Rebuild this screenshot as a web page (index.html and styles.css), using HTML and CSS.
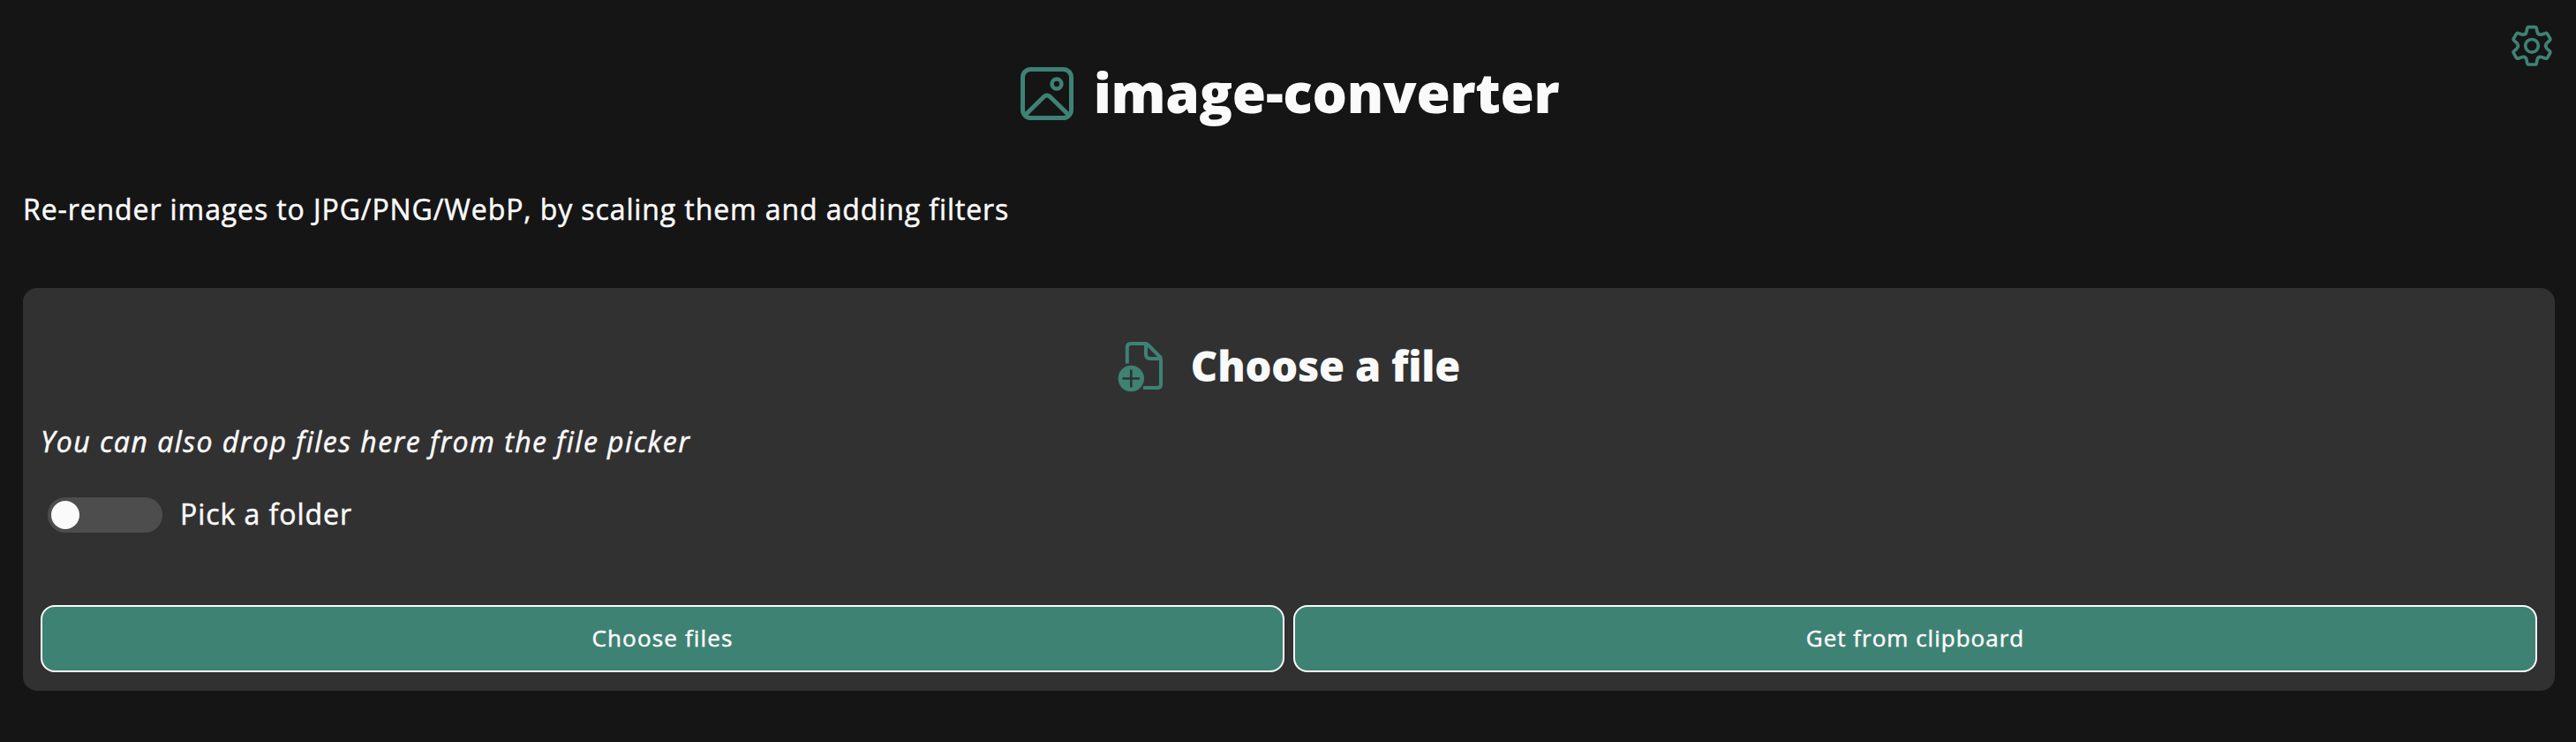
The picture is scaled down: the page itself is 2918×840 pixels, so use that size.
FILE: index.html
```html
<!DOCTYPE html>
<html lang="en">
<head>
<meta charset="utf-8">
<title>image-converter</title>
<link rel="stylesheet" href="styles.css">
</head>
<body>
<button class="settings" aria-label="Settings">
  <svg viewBox="78 80 144 144" width="48" height="48" fill="none" stroke="currentColor" stroke-width="11" stroke-linejoin="round">
    <path d="M139 91H161Q165 91 166 96L168 107Q171 119 184 116L195 112Q200 110 203 115L212 130Q214 134 210 137L202 144Q192 154 202 165L210 172Q214 175 212 179L203 195Q200 199 195 197L184 193Q171 190 168 202L166 213Q165 218 161 218H139Q135 218 134 213L132 202Q129 190 116 193L105 197Q100 199 97 195L88 179Q86 175 90 172L98 165Q108 154 98 144L90 137Q86 134 88 130L97 115Q100 110 105 112L116 116Q129 119 132 107L134 96Q135 91 139 91Z"/>
    <circle cx="150" cy="154.500" r="22"/>
  </svg>
</button>
<header class="masthead">
  <svg viewBox="0 0 60 60" width="60" height="60" fill="none" stroke="currentColor" stroke-width="5">
    <rect x="2.500" y="2.500" width="55" height="55" rx="9"/>
    <circle cx="41" cy="19" r="5.400" stroke-width="4.500"/>
    <path d="M5 54.500L26.500 33.500Q30 30.500 33.500 33.500L55 54.500"/>
  </svg>
  <h1 class="title">image-converter</h1>
</header>
<p class="intro">Re-render images to JPG/PNG/WebP, by scaling them and adding filters</p>
<main class="card">
  <div class="card-head">
    <svg viewBox="1267 387 52 58" width="52" height="58" fill="none" stroke="currentColor" stroke-width="4">
      <path d="M1277.800 412.500V394Q1277.800 390 1282 390H1298.500Q1300 390 1301.500 391.500L1315 405Q1316 406 1316 408V436Q1316 440 1312 440H1296"/>
      <path d="M1299 390V402Q1299 407 1304 407H1316"/>
      <circle cx="1282.300" cy="429.500" r="14.700" fill="currentColor" stroke="none"/>
      <path class="plus" d="M1273.500 429.500H1291M1282.300 420.500V438.500" stroke-width="2.600" stroke-linecap="round"/>
    </svg>
    <h2 class="heading">Choose a file</h2>
  </div>
  <p class="hint">You can also drop files here from the file picker</p>
  <div class="option">
    <span class="switch"><span class="knob"></span></span>
    <span class="option-label">Pick a folder</span>
  </div>
  <div class="actions">
    <button class="action">Choose files</button>
    <button class="action clip">Get from clipboard</button>
  </div>
</main>
</body>
</html>
```
FILE: styles.css
```css
* { box-sizing: border-box; }
body {
  margin: 0;
  padding: 70px 24px 0 26px;
  background: #151515;
  color: #fafafa;
  font-family: "Open Sans", "Noto Sans", sans-serif;
  font-size: 32px;
}
h1, h2, p { margin: 0; white-space: nowrap; }
svg { display: block; flex: none; }
.intro, .hint, .option-label, .action { -webkit-text-stroke: 0.5px #fafafa; }
.settings {
  position: absolute;
  top: 27px;
  right: 26px;
  padding: 0;
  border: 0;
  background: none;
  color: #3e8274;
}
.masthead {
  display: flex;
  justify-content: center;
  align-items: center;
  gap: 23px;
  height: 72px;
  padding-left: 2px;
  color: #3e8274;
}
.title {
  padding-bottom: 4px;
  color: #fafafa;
  font-size: 62px;
  line-height: 68px;
  font-weight: 800;
  letter-spacing: -0.3px;
}
.intro { margin: 75px 0 1px; line-height: 40px; letter-spacing: 0.9px; }
.card {
  height: 456px;
  margin-top: 69px;
  padding: 56px 20px 20px;
  border-radius: 16px;
  background: #313131;
}
.card-head {
  display: flex;
  align-items: center;
  justify-content: center;
  gap: 31px;
  height: 66px;
  color: #3e8274;
}
.plus { stroke: #313131; }
.heading {
  padding-bottom: 2px;
  color: #fafafa;
  font-size: 47px;
  line-height: 60px;
  font-weight: 800;
  letter-spacing: -0.2px;
}
.hint { margin: 32px 0 1px; line-height: 40px; font-style: italic; letter-spacing: 1.48px; }
.option { display: flex; align-items: center; gap: 20px; height: 40px; margin: 43px 0 0 8px; }
.switch { width: 130px; height: 40px; padding: 4px; border-radius: 20px; background: #4d4d4d; }
.knob { display: block; width: 32px; height: 32px; border-radius: 50%; background: #fafafa; }
.option-label { padding-bottom: 2px; line-height: 40px; letter-spacing: 0.95px; }
.actions { display: grid; grid-template-columns: 1fr 1fr; gap: 10px; margin-top: 82px; }
.action {
  height: 76px;
  padding: 0 0 3px;
  border: 2px solid #fafafa;
  border-radius: 16px;
  background: #3e8274;
  color: #fafafa;
  font: 26px/36px "Open Sans", "Noto Sans", sans-serif;
  letter-spacing: 1.15px;
}
.clip { letter-spacing: 1px; }
```
